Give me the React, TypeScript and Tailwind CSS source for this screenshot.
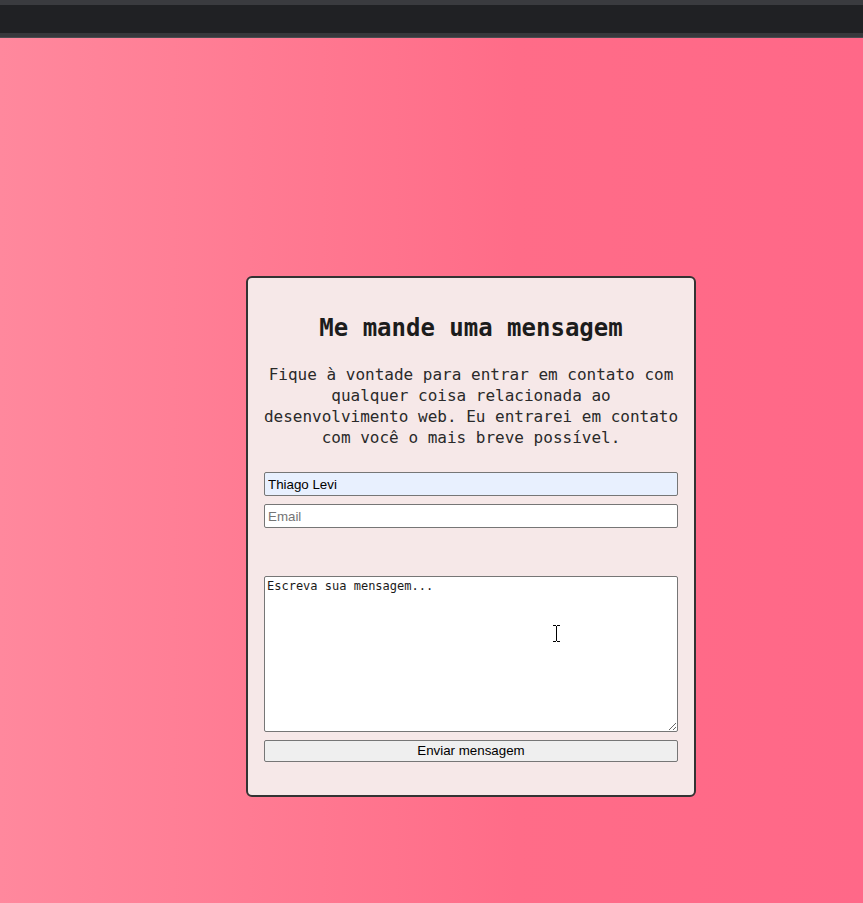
import React from 'react';

export default function App() {
  return (
    <div className="h-[903px] w-full overflow-hidden flex flex-col">
      {/* barra escura do topo */}
      <div className="h-[5px] bg-[#3a3b3f]" />
      <div className="h-[28px] bg-[#202124]" />
      <div className="h-[4px] bg-[#37383c]" />
      <div className="h-px bg-[#4a4b50]" />

      <main className="relative flex-1 bg-linear-to-r from-[#ff889d] via-[#ff6c88] via-60% to-[#ff6888]">
        <div className="ml-[246px] mt-[238px] w-[450px] rounded-[6px] border-2 border-[#333] bg-[#f6e8e8] px-4 pt-4 pb-[33px] font-['DejaVu_Sans_Mono',monospace] text-[#222]">
          <h2 className="mt-5 text-center text-[24px] font-bold leading-[28px] text-[#1c1c1c]">
            Me mande uma mensagem
          </h2>
          <p className="-mx-1 mt-[22px] text-center text-[16px] leading-[21px] text-[#2a2a2a]">
            Fique à vontade para entrar em contato com qualquer coisa relacionada ao desenvolvimento web. Eu entrarei em contato com você o mais breve possível.
          </p>

          <form className="mt-[24px] flex flex-col font-['Liberation_Sans',Arial,sans-serif] text-[13.33px]">
            <input
              type="text"
              defaultValue="Thiago Levi"
              className="h-6 rounded-[2px] border border-[#767676] bg-[#e8f0fe] px-[3px] text-black outline-none"
            />
            <input
              type="email"
              placeholder="Email"
              className="mt-2 h-6 rounded-[2px] border border-[#767676] bg-white px-[3px] text-black outline-none placeholder:text-[#757575]"
            />
            <textarea
              placeholder="Escreva sua mensagem..."
              className="mt-12 h-[156px] resize-y rounded-[2px] border border-[#767676] bg-white px-[2px] py-[2px] font-['DejaVu_Sans_Mono',monospace] text-[12px] leading-[15px] text-black outline-none placeholder:text-[#1a1a1a]"
            />
            <button
              type="button"
              className="mt-2 h-[22px] rounded-[2px] border border-[#767676] bg-[#efefef] text-black"
            >
              Enviar mensagem
            </button>
          </form>
        </div>

        {/* cursor do mouse */}
        <svg className="absolute left-[552px] top-[587px]" width="9" height="17" viewBox="0 0 9 17">
          <path d="M1 0.5h3M5 0.5h3M4.5 1v15M1 16.5h3M5 16.5h3" stroke="#000" strokeWidth="1" fill="none" />
        </svg>
      </main>
    </div>
  );
}
